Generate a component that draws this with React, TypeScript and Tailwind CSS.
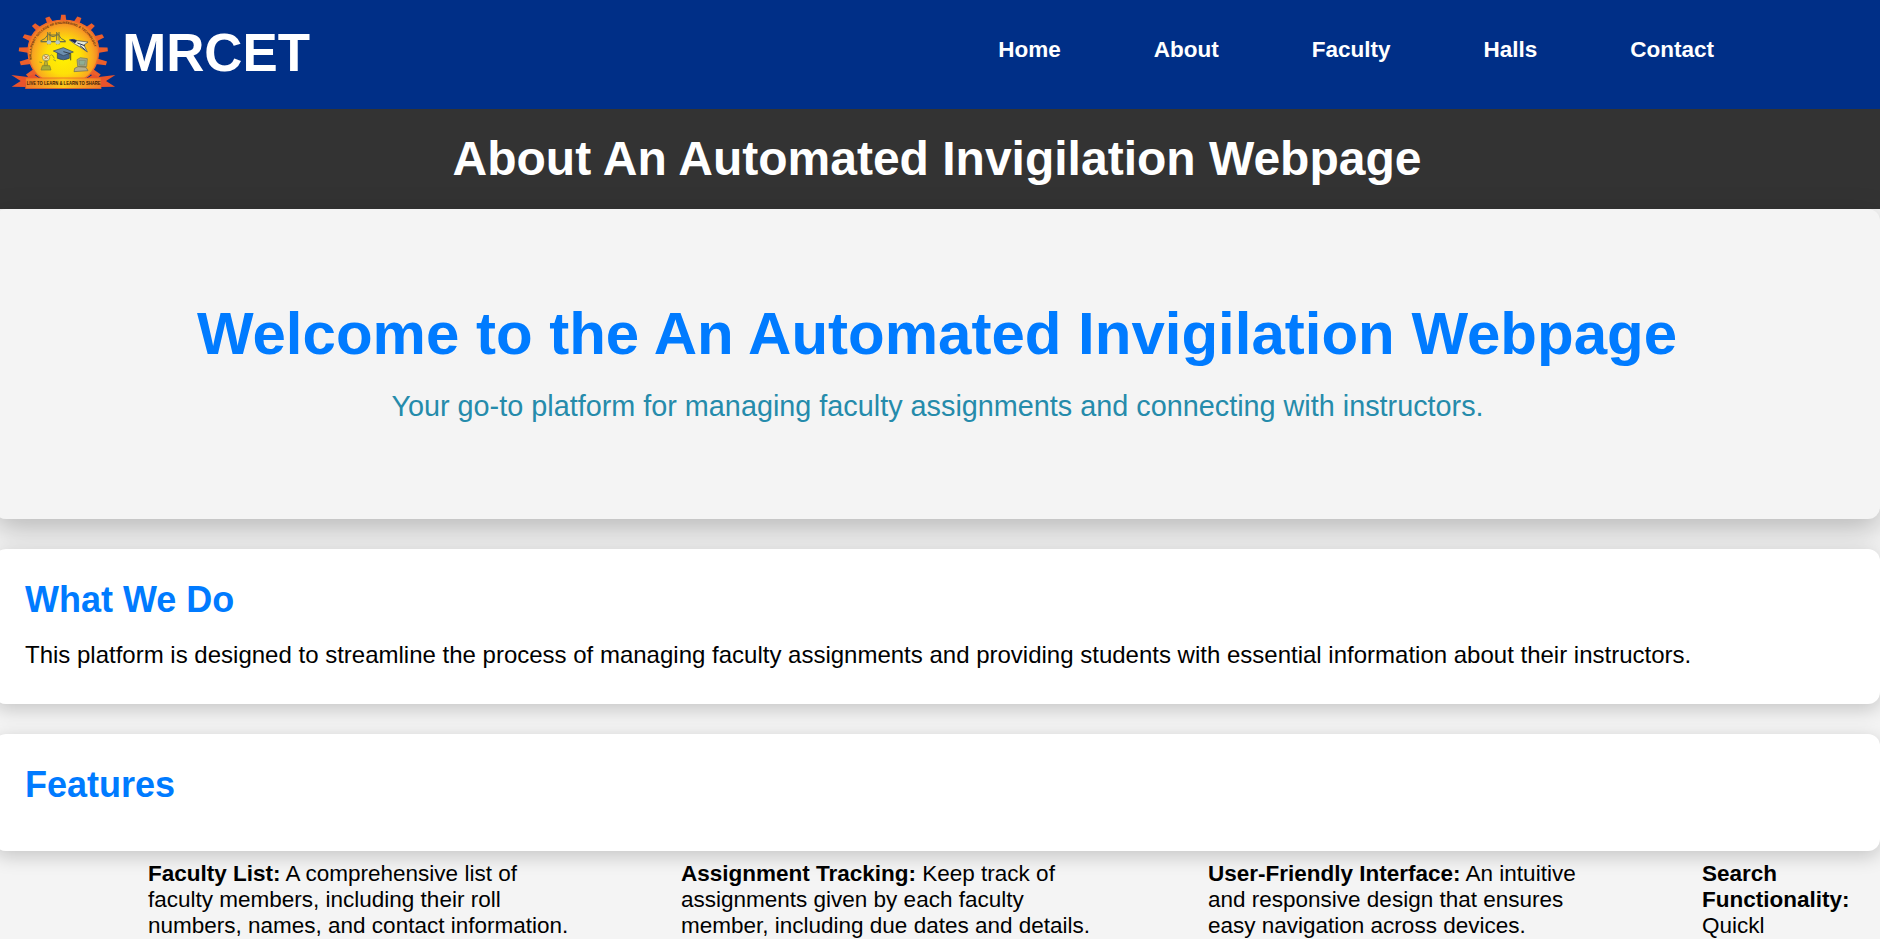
import React from "react";

const NAV = ["Home", "About", "Faculty", "Halls", "Contact"];

const TEETH = [-6, -5, -4, -3, -2, -1, 0, 1, 2, 3, 4, 5, 6].map((i) => i * 21);

function toothPoints(deg: number) {
  const at = (d: number, rx: number, ry: number) => {
    const a = (d * Math.PI) / 180;
    return `${(190 + rx * Math.sin(a)).toFixed(1)},${(161 - ry * Math.cos(a)).toFixed(1)}`;
  };
  return [at(deg - 5.5, 103, 92), at(deg - 2.8, 134, 116), at(deg + 2.8, 134, 116), at(deg + 5.5, 103, 92)].join(" ");
}

function Logo() {
  return (
    <svg viewBox="30 40 320 234" className="h-[78px] w-[106.7px] shrink-0" aria-label="MRCET emblem">
      <defs>
        <radialGradient id="disc" cx="190" cy="172" r="114" gradientUnits="userSpaceOnUse">
          <stop offset="0" stopColor="#fff200" />
          <stop offset="0.45" stopColor="#fee008" />
          <stop offset="0.78" stopColor="#f9a820" />
          <stop offset="1" stopColor="#ef7428" />
        </radialGradient>
        <linearGradient id="ribbon" x1="77" x2="303" y1="0" y2="0" gradientUnits="userSpaceOnUse">
          <stop offset="0" stopColor="#ef7a2a" />
          <stop offset="0.5" stopColor="#fdc81a" />
          <stop offset="1" stopColor="#ef7a2a" />
        </linearGradient>
      </defs>
      <g fill="#ec5f2b">
        {TEETH.map((d) => (
          <polygon key={d} points={toothPoints(d)} />
        ))}
      </g>
      <path d="M112 226 C58 165 82 62 190 62 C298 62 322 165 268 226 L252 238 L128 238 Z" fill="url(#disc)" stroke="#ee6a2c" strokeWidth="4" />
      <path id="motto-arc" d="M95 180 A96 94 0 1 1 285 180" fill="none" />
      <text fontFamily="Liberation Sans, sans-serif" fontSize="9.7" fontWeight="700" fill="#5c2c10">
        <textPath href="#motto-arc">MALLA REDDY COLLEGE OF ENGINEERING &amp; TECHNOLOGY</textPath>
      </text>
      {/* bridge */}
      <g fill="none" stroke="#6d7045" strokeWidth="3">
        <path d="M121 124 Q136 120 146 102 Q159 120 173 102 Q182 120 197 124" />
        <path d="M122 126 H197" strokeWidth="4" />
        <path d="M143 97 V134 M150 97 V134 M170 97 V134 M177 97 V134 M146 106 H174" />
      </g>
      <ellipse cx="147" cy="128" rx="7" ry="6" fill="#b9c9c2" />
      <ellipse cx="173" cy="128" rx="7" ry="6" fill="#b9c9c2" />
      {/* shuttle */}
      <path d="M208 121 Q220 116 232 123 L264 127 L252 136 L262 157 L240 142 L226 134 Z" fill="#e6ead9" stroke="#3d4a58" strokeWidth="2" />
      <path d="M208 120 Q220 116 231 123 L225 131 Z" fill="#1c2554" />
      <path d="M232 130 L254 138 M240 138 L257 152" stroke="#26304f" strokeWidth="3" />
      {/* mortarboard */}
      <path d="M172 158 V176 Q190 185 208 176 V158 Z" fill="#47698e" stroke="#2f4054" strokeWidth="2" />
      <path d="M160 154 L190 144 L220 157 L190 168 Z" fill="#6b8fb0" stroke="#2f4054" strokeWidth="2" />
      <path d="M190 156 L212 162 V182" fill="none" stroke="#2c3135" strokeWidth="2.5" />
      {/* trophy */}
      <ellipse cx="138" cy="174" rx="11" ry="10" fill="#e9e3b0" stroke="#86862f" strokeWidth="2" />
      <path d="M132 168 L143 177 M144 168 L133 179" stroke="#c66a22" strokeWidth="3" />
      <path d="M135 184 H141 L143 197 H132 Z" fill="#c7b52c" stroke="#777b35" strokeWidth="2" />
      <path d="M127 198 H149 L153 211 H123 Z" fill="#a7ac38" stroke="#777b35" strokeWidth="2" />
      <path d="M118 187 L126 189 M151 168 L155 165 M157 166 L163 176 M160 180 L168 184" stroke="#9aa02c" strokeWidth="3" />
      {/* computer */}
      <path d="M231 180 L241 174 L262 177 L260 201 L233 200 Z" fill="#a5a886" stroke="#6b7262" strokeWidth="2" />
      <path d="M237 182 L256 182 L254 196 L238 196 Z" fill="#8fae94" stroke="#777b5c" strokeWidth="1.5" />
      <path d="M224 206 L234 201 L258 203 L264 213 L222 216 Z" fill="#b5ae8c" stroke="#6b6650" strokeWidth="2" />
      {/* ribbon */}
      <path d="M34 226 L84 232 L100 224 L118 236 L77 250 V262 L35 261 L62 244 Z" fill="#e9532b" />
      <path d="M346 226 L296 232 L280 224 L262 236 L303 250 V262 L345 261 L318 244 Z" fill="#e9532b" />
      <rect x="77" y="235" width="226" height="32" fill="url(#ribbon)" stroke="#e9572b" strokeWidth="2" />
      <text transform="translate(80 257) scale(0.735 1)" fontFamily="Liberation Sans, sans-serif" fontSize="17" fontWeight="700" fill="#3c1a06">
        LIVE TO LEARN &amp; LEARN TO SHARE
      </text>
    </svg>
  );
}

function Card({ className = "", title, children }: { className?: string; title: string; children?: React.ReactNode }) {
  return (
    <section className={`-ml-[6px] rounded-[12px] bg-white px-[31px] shadow-[0_5px_18.75px_rgba(0,0,0,0.2)] ${className}`}>
      <h2 className="text-[36px] leading-[42px] font-bold text-[#007bff]">{title}</h2>
      {children}
    </section>
  );
}

export default function App() {
  return (
    <div className="h-[939px] overflow-hidden bg-[#f4f4f4] font-['Liberation_Sans',Arial,sans-serif] text-black">
      <header className="flex h-[109px] bg-[#002f87] text-white">
        <div className="flex flex-1 items-start pt-[13px] pl-[10px]">
          <Logo />
          <span className="mt-[10px] ml-[5.5px] text-[52.8px] leading-[60px] font-bold">MRCET</span>
        </div>
        <nav className="flex gap-[93px] pt-[37px] pr-[166px] text-[22.5px] leading-[26px] font-bold">
          {NAV.map((n) => (
            <a key={n} href="#">
              {n}
            </a>
          ))}
        </nav>
      </header>

      <div className="h-[100px] bg-[#333] pt-[22px] pr-[6px] text-center text-white">
        <h1 className="text-[48px] leading-[56px] font-bold">About An Automated Invigilation Webpage</h1>
      </div>

      <section className="-ml-[6px] h-[310px] rounded-[12px] bg-[#f4f4f4] pt-[91px] text-center shadow-[0_10px_31px_rgba(0,0,0,0.25)]">
        <h2 className="text-[60px] leading-[68px] font-bold text-[#007bff]">
          Welcome to the An Automated Invigilation Webpage
        </h2>
        <p className="mt-[21px] pl-px text-[28.8px] leading-[34px] text-[#258bab]">
          Your go-to platform for managing faculty assignments and connecting with instructors.
        </p>
      </section>

      <Card title="What We Do" className="mt-[30px] h-[155px] pt-[30px]">
        <p className="mt-[20px] text-[24px] leading-[28px]">
          This platform is designed to streamline the process of managing faculty assignments and providing students with
          essential information about their instructors.
        </p>
      </Card>
      <Card title="Features" className="mt-[30px] h-[117px] pt-[30px]" />

      <ul className="flex pt-[10px] pl-[148px] text-[22.5px] leading-[26px] whitespace-nowrap">
        <li className="w-[533px]">
          <strong>Faculty List:</strong> A comprehensive list of
          <br />
          faculty members, including their roll
          <br />
          numbers, names, and contact information.
        </li>
        <li className="w-[527px]">
          <strong>Assignment Tracking:</strong> Keep track of
          <br />
          assignments given by each faculty
          <br />
          member, including due dates and details.
        </li>
        <li className="w-[494px]">
          <strong>User-Friendly Interface:</strong> An intuitive
          <br />
          and responsive design that ensures
          <br />
          easy navigation across devices.
        </li>
        <li>
          <strong>
            Search
            <br />
            Functionality:
          </strong>
          <br />
          Quickl
        </li>
      </ul>
    </div>
  );
}
